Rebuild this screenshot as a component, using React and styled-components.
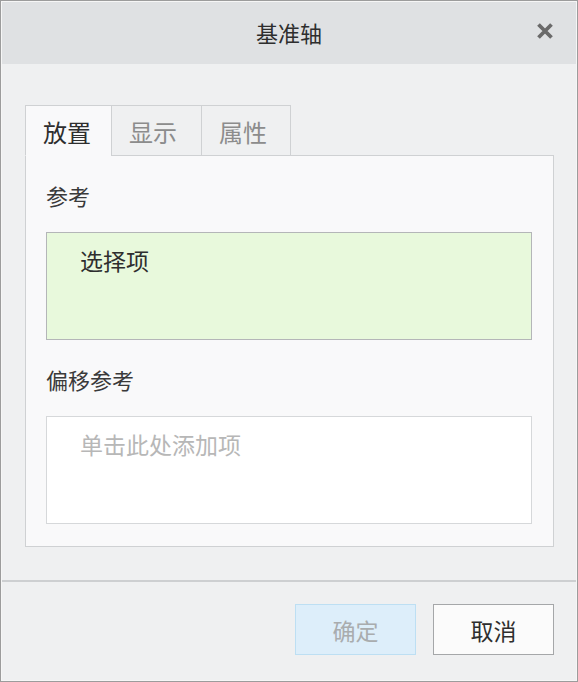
import React, { useState } from "react";
import styled, { createGlobalStyle } from "styled-components";

const GlobalStyle = createGlobalStyle`
  html, body {
    margin: 0;
    padding: 0;
    background: #eff0f1;
  }
  * {
    box-sizing: border-box;
  }
`;

const Dialog = styled.div`
  width: 578px;
  height: 682px;
  display: flex;
  flex-direction: column;
  background: #eff0f1;
  border: 1px solid #9c9c9c;
  box-shadow: inset 0 0 0 1px #f6f6f6;
  font-family: "Noto Sans CJK SC", "Noto Sans", sans-serif;
  color: #333;
`;

const TitleBar = styled.div`
  height: 63px;
  margin: 1px 1px 0;
  background: #dfe1e3;
  display: grid;
  grid-template-columns: 60px 1fr 60px;
  align-items: center;
`;

const Title = styled.div`
  grid-column: 2;
  text-align: center;
  font-size: 22px;
  line-height: 30px;
  color: #2e2e2e;
  padding-bottom: 2px;
`;

const CloseButton = styled.button`
  justify-self: end;
  margin-right: 20px;
  margin-bottom: 4px;
  width: 22px;
  height: 22px;
  padding: 0;
  border: none;
  background: transparent;
  display: flex;
  align-items: center;
  justify-content: center;
  cursor: pointer;
`;

const Body = styled.div`
  flex: 1;
  padding: 41px 23px 33px 24px;
  display: flex;
  flex-direction: column;
`;

const TabRow = styled.div`
  display: flex;
  height: 51px;
  margin-bottom: -1px;
  position: relative;
  z-index: 1;
`;

const Tab = styled.button`
  width: ${(p) => p.$w}px;
  height: 51px;
  padding: 0;
  margin: 0;
  margin-left: ${(p) => (p.$first ? 0 : -1)}px;
  border: 1px solid #cfd1d3;
  border-bottom: ${(p) => (p.$active ? "1px solid #f9f9fa" : "1px solid #cfd1d3")};
  background: ${(p) => (p.$active ? "#f9f9fa" : "#eff0f1")};
  color: ${(p) => (p.$active ? "#2e2e2e" : "#8c8c8c")};
  font-family: inherit;
  font-size: 24px;
  line-height: 30px;
  text-align: left;
  padding-left: 17px;
  padding-top: 2px;
  cursor: pointer;
`;

const Panel = styled.div`
  height: 392px;
  background: #f9f9fa;
  border: 1px solid #cfd1d3;
  padding: 24px 21px 21px 20px;
  display: flex;
  flex-direction: column;
`;

const Label = styled.div`
  font-size: 22px;
  line-height: 30px;
  color: #3a3a3a;
  margin-bottom: 22px;
  margin-top: ${(p) => p.$top || 0}px;
`;

const ListBox = styled.div`
  height: 108px;
  background: ${(p) => (p.$selected ? "#e8f9dc" : "#ffffff")};
  border: 1px solid ${(p) => (p.$selected ? "#b4b6b8" : "#d6d8da")};
  padding: 12px 33px;
  font-size: 23px;
  line-height: 30px;
  color: ${(p) => (p.$placeholder ? "#b7b7b7" : "#2e2e2e")};
`;

const Footer = styled.div`
  border-top: 2px solid #cdcfd1;
  margin: 0 1px 1px;
  padding: 22px 22px 0 0;
  height: 101px;
  display: flex;
  justify-content: flex-end;
  gap: 17px;
`;

const Button = styled.button`
  width: 121px;
  height: 51px;
  font-family: inherit;
  font-size: 23px;
  line-height: 30px;
  padding: 0;
  cursor: pointer;
  background: ${(p) => (p.$disabled ? "#ddeefa" : "#fbfbfb")};
  border: 1px solid ${(p) => (p.$disabled ? "#bddff3" : "#a5a7a9")};
  color: ${(p) => (p.$disabled ? "#a9acae" : "#2e2e2e")};
`;

const tabs = [
  { label: "放置", w: 87 },
  { label: "显示", w: 91 },
  { label: "属性", w: 90 },
];

export default function App() {
  const [active, setActive] = useState(0);

  return (
    <>
      <GlobalStyle />
      <Dialog>
        <TitleBar>
          <Title>基准轴</Title>
          <CloseButton aria-label="关闭">
            <svg width="18" height="18" viewBox="0 0 18 18">
              <path
                d="M2.5 2.5 L15.5 15.5 M15.5 2.5 L2.5 15.5"
                stroke="#6a6a6a"
                strokeWidth="3.8"
                strokeLinecap="butt"
              />
            </svg>
          </CloseButton>
        </TitleBar>
        <Body>
          <TabRow>
            {tabs.map((t, i) => (
              <Tab
                key={t.label}
                $w={t.w}
                $first={i === 0}
                $active={active === i}
                onClick={() => setActive(i)}
              >
                {t.label}
              </Tab>
            ))}
          </TabRow>
          <Panel>
            <Label>参考</Label>
            <ListBox $selected>选择项</ListBox>
            <Label $top={24}>偏移参考</Label>
            <ListBox $placeholder>单击此处添加项</ListBox>
          </Panel>
        </Body>
        <Footer>
          <Button $disabled>确定</Button>
          <Button>取消</Button>
        </Footer>
      </Dialog>
    </>
  );
}
